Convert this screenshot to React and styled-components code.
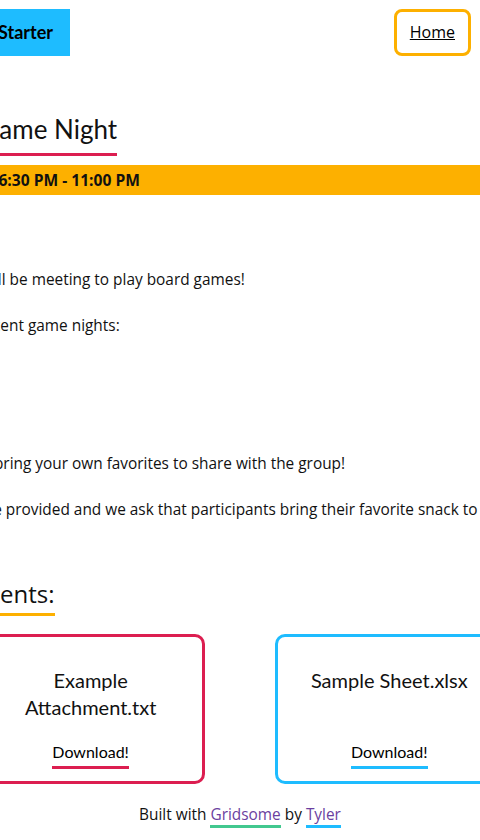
import React from 'react'
import styled, { createGlobalStyle } from 'styled-components'

const GlobalStyle = createGlobalStyle`
  * {
    box-sizing: border-box;
  }
  html,
  body {
    margin: 0;
    padding: 0;
    background: #fff;
    overflow: hidden;
  }
  body {
    font-family: 'Open Sans', 'Noto Sans', sans-serif;
    font-size: 15.4px;
    color: #111;
  }
`

const attachments = [
  { name: 'Example Attachment.txt', color: '#dc1e50' },
  { name: 'Sample Sheet.xlsx', color: '#1ebcff' },
]

const recentNights = ['Jan 10', 'Feb 14']

const Page = styled.div`
  display: flex;
  flex-direction: column;
  align-items: center;
  width: 100%;
  overflow: hidden;
`

const Header = styled.header`
  align-self: stretch;
  display: flex;
  justify-content: space-between;
  align-items: flex-start;
  padding: 9px 9px 0 0;
`

const BrandSlot = styled.div`
  width: 70px;
  display: flex;
  justify-content: flex-end;
`

const Brand = styled.a`
  flex-shrink: 0;
  white-space: nowrap;
  height: 47px;
  padding: 0 17px;
  background: #1ebcff;
  color: #000;
  font: 700 18px/47px 'Lato', sans-serif;
  text-decoration: none;
`

const NavLink = styled.a`
  display: block;
  padding: 8px 13px;
  border: 3px solid #fdb000;
  border-radius: 8px;
  color: #000;
  font-size: 16px;
  line-height: 25px;
  text-decoration: underline;
`

const Main = styled.main`
  width: 668px;
  flex-shrink: 0;
`

const Title = styled.h1`
  width: fit-content;
  margin: 57px 0 9px;
  padding-bottom: 8px;
  border-bottom: 3px solid #dc1e50;
  font: 400 26px/32px 'Lato', sans-serif;
`

const DateBar = styled.div`
  background: #fdb000;
  font-size: 15.6px;
  font-weight: 700;
  line-height: 30px;
  white-space: nowrap;
`

const Body = styled.div`
  margin-top: 70px;
  line-height: 30px;
`

const Paragraph = styled.p`
  margin: 16px 0;
  white-space: nowrap;
`

const GameList = styled.ul`
  margin: 16px 0;
  padding-left: 40px;
`

const GameItem = styled.li`
  margin: 16px 0;
`

const SectionTitle = styled.h2`
  width: fit-content;
  margin: 53px 0 18px;
  padding-bottom: 3px;
  border-bottom: 3px solid #fdb000;
  font-size: 24px;
  font-weight: 400;
  line-height: 32px;
`

const Cards = styled.div`
  display: flex;
  justify-content: space-evenly;
`

const Card = styled.div`
  width: 228px;
  display: flex;
  flex-direction: column;
  align-items: center;
  padding: 30px 24px 12px;
  border: 3px solid ${(p) => p.$color};
  border-radius: 10px;
`

const CardTitle = styled.h3`
  margin: 0 0 20px;
  font: 400 20px/27px 'Lato', sans-serif;
  text-align: center;
`

const DownloadLink = styled.a`
  margin-top: auto;
  display: block;
  padding-bottom: 3px;
  border-bottom: 3px solid ${(p) => p.$color};
  color: #000;
  font: 400 16px/22px 'Lato', sans-serif;
  text-decoration: none;
`

const Footer = styled.footer`
  align-self: stretch;
  padding: 21px 0 16px;
  line-height: 20px;
  text-align: center;
`

const FooterLink = styled.a`
  color: #6b3fa0;
  text-decoration: none;
  border-bottom: 3px solid ${(p) => p.$color};
`

const App = () => (
  <Page>
    <GlobalStyle />
    <Header>
      <BrandSlot>
        <Brand href="#">Gridsome Starter</Brand>
      </BrandSlot>
      <NavLink href="#">Home</NavLink>
    </Header>
    <Main>
      <Title>Board Game Night</Title>
      <DateBar>Mar 7, 2020 6:30 PM - 11:00 PM</DateBar>
      <Body>
        <Paragraph>Saturday we'll be meeting to play board games!</Paragraph>
        <Paragraph>Our most recent game nights:</Paragraph>
        <GameList>
          {recentNights.map((night) => (
            <GameItem key={night}>{night}</GameItem>
          ))}
        </GameList>
        <Paragraph>
          Guests may bring your own favorites to share with the group!
        </Paragraph>
        <Paragraph>
          Drinks will be provided and we ask that participants bring their
          favorite snack to share.
        </Paragraph>
      </Body>
      <SectionTitle>Attachments:</SectionTitle>
      <Cards>
        {attachments.map((file) => (
          <Card key={file.name} $color={file.color}>
            <CardTitle>{file.name}</CardTitle>
            <DownloadLink href="#" $color={file.color}>
              Download!
            </DownloadLink>
          </Card>
        ))}
      </Cards>
    </Main>
    <Footer>
      Built with{' '}
      <FooterLink href="#" $color="#42c88f">
        Gridsome
      </FooterLink>{' '}
      by{' '}
      <FooterLink href="#" $color="#1ebcff">
        Tyler
      </FooterLink>
    </Footer>
  </Page>
)

export default App
